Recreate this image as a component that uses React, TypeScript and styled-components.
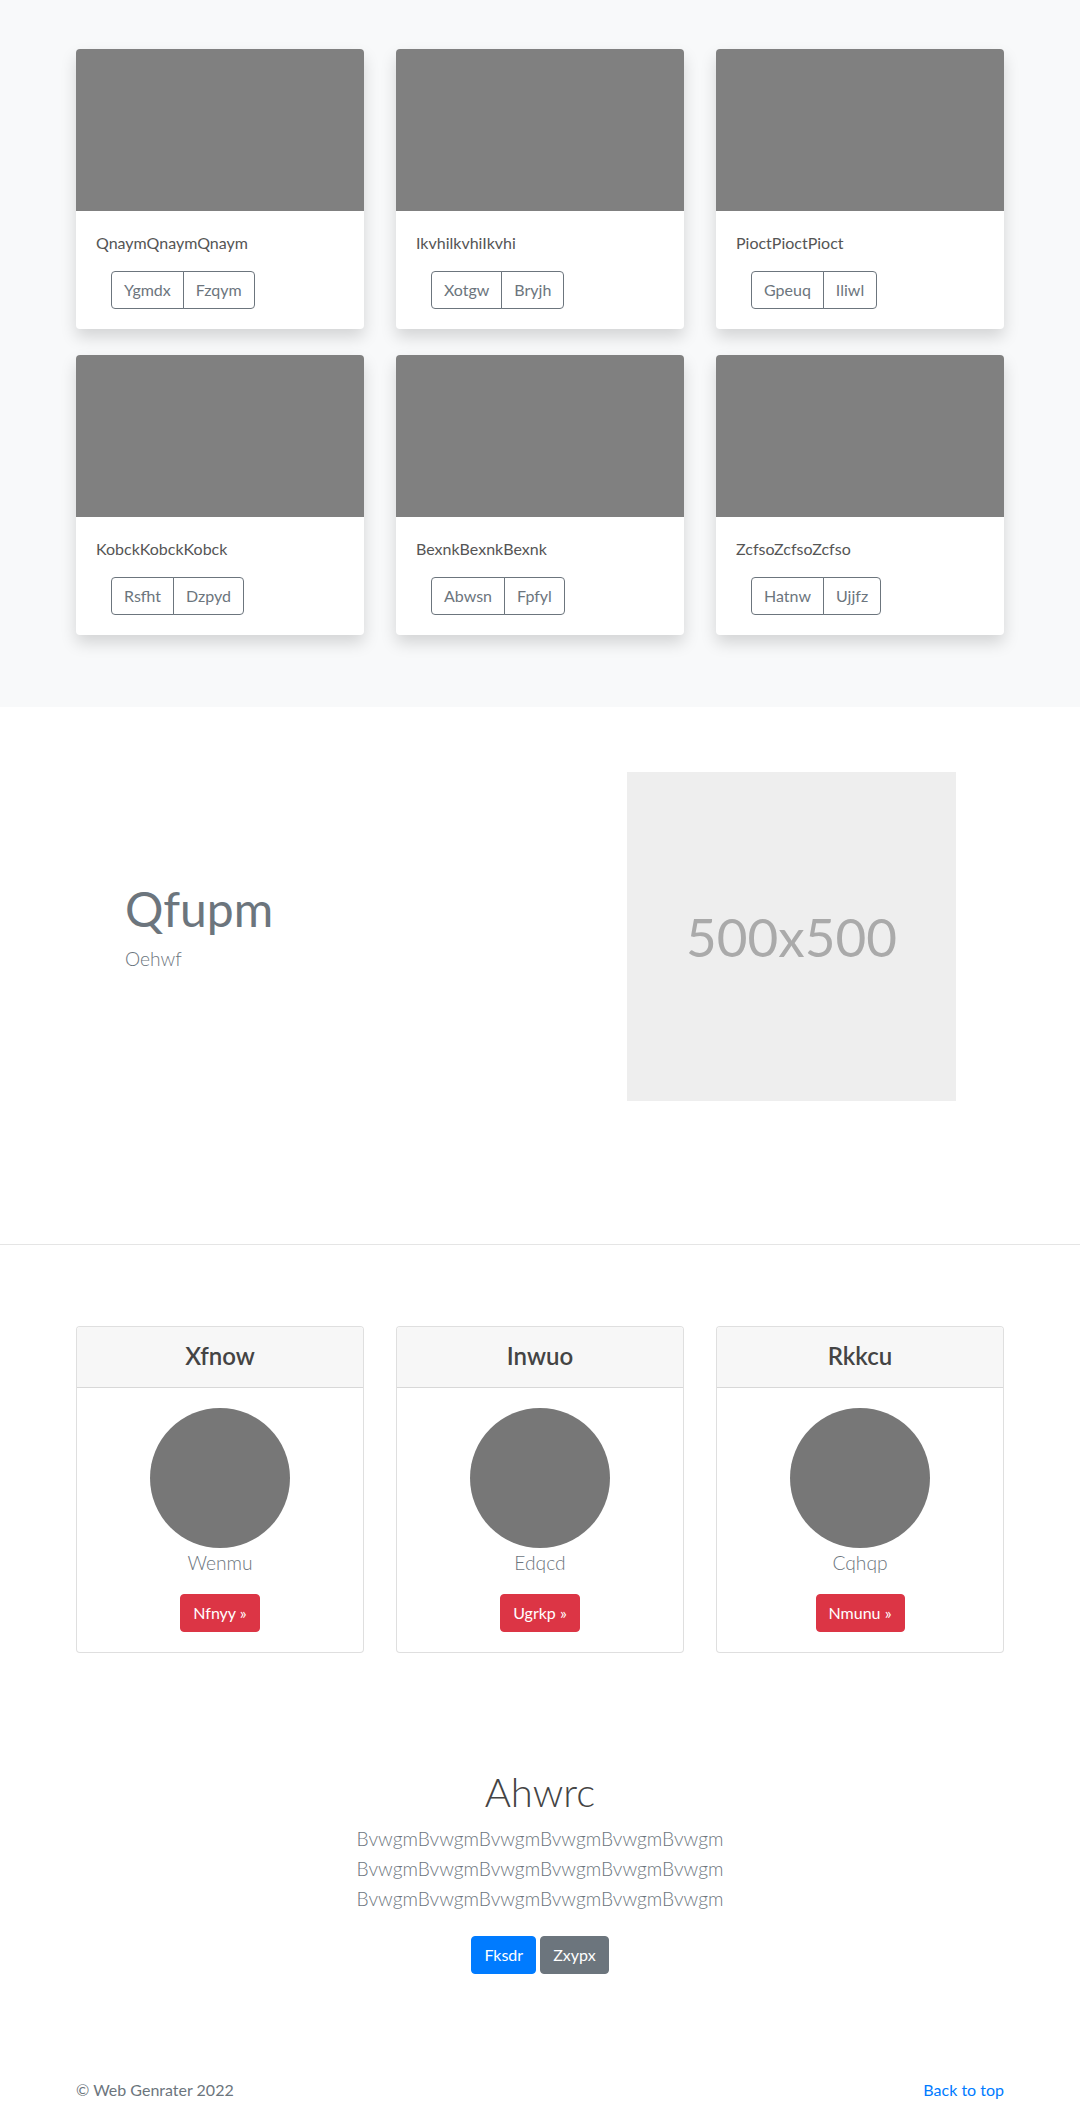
import React from "react";
import styled, { createGlobalStyle } from "styled-components";

const GlobalStyle = createGlobalStyle`
  html, body { margin: 0; padding: 0; }
  body {
    font-family: Lato, "Open Sans", "Noto Sans", sans-serif;
    font-size: 16px;
    line-height: 1.5;
    color: #212529;
    background: #fff;
  }
  * { box-sizing: border-box; }
`;

const Container = styled.div`
  width: 928px;
  margin: 0 auto;
`;

/* ---------- Album ---------- */
const AlbumSection = styled.section`
  background: #f8f9fa;
  padding: 49px 0 72px;
`;

const CardGrid = styled.div`
  display: grid;
  grid-template-columns: repeat(3, 1fr);
  gap: 26px 32px;
`;

const AlbumCard = styled.div`
  background: #fff;
  border-radius: 4px;
  overflow: hidden;
  box-shadow: 0 8px 16px rgba(0, 0, 0, 0.15);
`;

const Thumb = styled.div`
  height: 162px;
  background: #808080;
`;

const CardBody = styled.div`
  padding: 20px;
`;

const CardText = styled.p`
  margin: 0 0 16px;
  font-size: 16px;
  line-height: 24px;
  color: #555;
`;

const BtnGroup = styled.div`
  display: inline-flex;
  margin-left: 15px;
`;

const OutlineBtn = styled.button`
  font-family: inherit;
  font-size: 16px;
  line-height: 24px;
  padding: 6px 12px;
  background: transparent;
  color: #6c757d;
  border: 1px solid #6c757d;
  border-radius: 0;
  &:first-child { border-radius: 4px 0 0 4px; }
  &:last-child { border-radius: 0 4px 4px 0; margin-left: -1px; }
`;

/* ---------- Hero ---------- */
const HeroSection = styled.section`
  padding: 65px 0 143px;
  border-bottom: 1px solid #e5e5e5;
`;

const HeroRow = styled.div`
  display: grid;
  grid-template-columns: 1fr 1fr;
  gap: 32px;
  align-items: center;
`;

const HeroText = styled.div`
  padding-left: 49px;
`;

const HeroTitle = styled.h1`
  margin: 0 0 8px;
  font-size: 48px;
  line-height: 1.1;
  font-weight: 400;
  color: #6c757d;
`;

const Lead = styled.p`
  margin: 0 0 16px;
  font-size: 19.2px;
  line-height: 30px;
  font-weight: 300;
  color: #6c757d;
`;

const HeroMedia = styled.div`
  padding-left: 71px;
`;

const Placeholder = styled.div`
  width: 329px;
  height: 329px;
  background: #eeeeee;
  color: #aaaaaa;
  font-size: 53px;
  display: flex;
  align-items: center;
  justify-content: center;
`;

/* ---------- Pricing ---------- */
const PricingSection = styled.section`
  padding-top: 81px;
`;

const PriceCard = styled.div`
  border: 1px solid rgba(0, 0, 0, 0.125);
  border-radius: 4px;
  background: #fff;
  overflow: hidden;
  text-align: center;
`;

const PriceHeader = styled.div`
  background: #f7f7f7;
  border-bottom: 1px solid rgba(0, 0, 0, 0.125);
  padding: 11px 20px 13px;
`;

const PriceTitle = styled.h4`
  margin: 0;
  font-size: 24px;
  line-height: 36px;
  font-weight: 600;
  color: #444;
`;

const PriceBody = styled.div`
  padding: 20px;
  display: flex;
  flex-direction: column;
  align-items: center;
`;

const Avatar = styled.div`
  width: 140px;
  height: 140px;
  border-radius: 50%;
  background: #777;
`;

const SolidBtn = styled.button<{ $variant: "danger" | "primary" | "secondary" }>`
  font-family: inherit;
  font-size: 16px;
  line-height: 24px;
  padding: 6px 12px;
  border-radius: 4px;
  color: #fff;
  border: 1px solid
    ${(p) => (p.$variant === "danger" ? "#dc3545" : p.$variant === "primary" ? "#007bff" : "#6c757d")};
  background: ${(p) =>
    p.$variant === "danger" ? "#dc3545" : p.$variant === "primary" ? "#007bff" : "#6c757d"};
`;

/* ---------- Jumbotron ---------- */
const JumboSection = styled.section`
  padding: 115px 0 57px;
  text-align: center;
`;

const JumboTitle = styled.h1`
  margin: 0 0 8px;
  font-size: 40px;
  line-height: 48px;
  font-weight: 300;
  color: #444;
`;

const JumboLead = styled(Lead)`
  max-width: 600px;
  margin: 0 auto 22px;
`;

const BtnRow = styled.div`
  display: flex;
  justify-content: center;
  gap: 4px;
`;

/* ---------- Footer ---------- */
const Footer = styled.footer`
  padding-top: 48px;
`;

const FooterRow = styled.div`
  display: flex;
  justify-content: space-between;
  font-size: 16px;
  line-height: 22px;
`;

const Copy = styled.span`
  color: #6c757d;
`;

const TopLink = styled.a`
  color: #007bff;
  text-decoration: none;
`;

const albums = [
  { text: "QnaymQnaymQnaym", a: "Ygmdx", b: "Fzqym" },
  { text: "IkvhilkvhiIkvhi", a: "Xotgw", b: "Bryjh" },
  { text: "PioctPioctPioct", a: "Gpeuq", b: "Iliwl" },
  { text: "KobckKobckKobck", a: "Rsfht", b: "Dzpyd" },
  { text: "BexnkBexnkBexnk", a: "Abwsn", b: "Fpfyl" },
  { text: "ZcfsoZcfsoZcfso", a: "Hatnw", b: "Ujjfz" },
];

const prices = [
  { title: "Xfnow", name: "Wenmu", btn: "Nfnyy" },
  { title: "Inwuo", name: "Edqcd", btn: "Ugrkp" },
  { title: "Rkkcu", name: "Cqhqp", btn: "Nmunu" },
];

const word = "Bvwgm".repeat(6);

export default function App() {
  return (
    <>
      <GlobalStyle />
      <AlbumSection>
        <Container>
          <CardGrid>
            {albums.map((c) => (
              <AlbumCard key={c.text}>
                <Thumb />
                <CardBody>
                  <CardText>{c.text}</CardText>
                  <BtnGroup>
                    <OutlineBtn>{c.a}</OutlineBtn>
                    <OutlineBtn>{c.b}</OutlineBtn>
                  </BtnGroup>
                </CardBody>
              </AlbumCard>
            ))}
          </CardGrid>
        </Container>
      </AlbumSection>

      <HeroSection>
        <Container>
          <HeroRow>
            <HeroText>
              <HeroTitle>Qfupm</HeroTitle>
              <Lead>Oehwf</Lead>
            </HeroText>
            <HeroMedia>
              <Placeholder>500x500</Placeholder>
            </HeroMedia>
          </HeroRow>
        </Container>
      </HeroSection>

      <PricingSection>
        <Container>
          <CardGrid>
            {prices.map((p) => (
              <PriceCard key={p.title}>
                <PriceHeader>
                  <PriceTitle>{p.title}</PriceTitle>
                </PriceHeader>
                <PriceBody>
                  <Avatar />
                  <Lead>{p.name}</Lead>
                  <SolidBtn $variant="danger">{p.btn} »</SolidBtn>
                </PriceBody>
              </PriceCard>
            ))}
          </CardGrid>
        </Container>
      </PricingSection>

      <JumboSection>
        <Container>
          <JumboTitle>Ahwrc</JumboTitle>
          <JumboLead>
            {word} {word} {word}
          </JumboLead>
          <BtnRow>
            <SolidBtn $variant="primary">Fksdr</SolidBtn>
            <SolidBtn $variant="secondary">Zxypx</SolidBtn>
          </BtnRow>
        </Container>
      </JumboSection>

      <Footer>
        <Container>
          <FooterRow>
            <Copy>© Web Genrater 2022</Copy>
            <TopLink href="#">Back to top</TopLink>
          </FooterRow>
        </Container>
      </Footer>
    </>
  );
}
